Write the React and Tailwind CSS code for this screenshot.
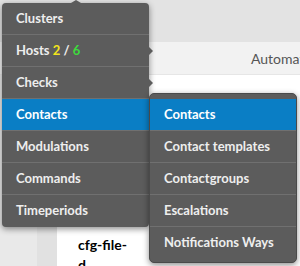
import React from "react";

const font = { fontFamily: "Lato, 'Open Sans', sans-serif" };

function Row({ children, active, last, arrow }) {
  return (
    <div
      className={
        "relative flex h-[32px] items-center px-[14px] text-[13px] font-bold " +
        (active ? "bg-[#0a7ec5] text-white " : "text-[#eeeeee] ") +
        (last ? "" : "border-b border-[#707070]")
      }
    >
      {children}
      {arrow && (
        <span className="absolute right-[-4px] top-[12px] h-0 w-0 border-y-[4px] border-l-[4px] border-y-transparent border-l-[#5c5c5c]" />
      )}
    </div>
  );
}

export default function App() {
  return (
    <div className="relative h-[266px] w-[300px] overflow-hidden bg-white" style={font}>
      {/* page background */}
      <div className="h-[42px] bg-[#e3e3e3] shadow-[0_1px_2px_rgba(0,0,0,0.12)]" />
      <div className="flex h-[33px] items-center border-b border-[#e6e6e6] bg-[#f2f2f2] pl-[251px]">
        <span className="whitespace-nowrap text-[14px] text-[#555]">Automatic</span>
      </div>
      <div className="flex h-[191px]">
        <div className="w-[37px] bg-[#e9e9e9]" />
        <div className="w-[20px] bg-[#e1e1e1]" />
        <div className="flex flex-1 flex-col bg-white">
          <div className="ml-[93px] mt-[10px] h-[9px] w-[63px] bg-[#5a5a5a]" />
          <div className="mt-[150px] pl-[21px] text-[14px] font-bold leading-[20px] text-black">
            cfg-file-
            <br />
            d
          </div>
        </div>
      </div>

      {/* main dropdown */}
      <div className="absolute left-[2px] top-[3px] w-[147px] rounded-[4px] bg-[#5c5c5c] shadow-[0_2px_6px_rgba(0,0,0,0.45)]">
        <span className="absolute left-[69px] top-[-3px] h-0 w-0 border-x-[5px] border-b-[3px] border-x-transparent border-b-[#5c5c5c]" />
        <Row>Clusters</Row>
        <Row arrow>
          Hosts&nbsp;<span className="text-[#f2e41c]">2</span>&nbsp;/&nbsp;
          <span className="text-[#3ddc3d]">6</span>
        </Row>
        <Row arrow>Checks</Row>
        <Row active>Contacts</Row>
        <Row>Modulations</Row>
        <Row>Commands</Row>
        <Row last>Timeperiods</Row>
      </div>

      {/* submenu */}
      <div className="absolute left-[149px] top-[93px] w-[148px] rounded-[5px] border border-[#4a4a4a] bg-[#5c5c5c] pb-[3px] pt-[5px] shadow-[0_2px_6px_rgba(0,0,0,0.45)]">
        <Row active>Contacts</Row>
        <Row>Contact templates</Row>
        <Row>Contactgroups</Row>
        <Row>Escalations</Row>
        <Row last>Notifications Ways</Row>
      </div>
    </div>
  );
}
